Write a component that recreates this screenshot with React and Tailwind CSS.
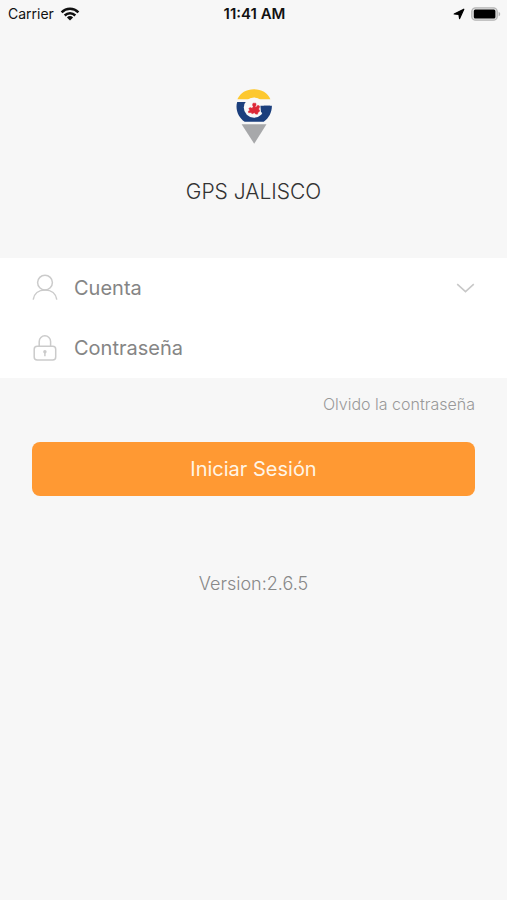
import { useState } from 'react';

function WifiIcon() {
    return (
        <svg viewBox="0 0 20 14" className="h-3.5 w-5" aria-hidden="true">
            <g fill="none" stroke="#111" strokeWidth="2.5">
                <path d="M1.6 5.3a12 12 0 0 1 16.8 0" />
                <path d="M4.7 8.5a7.6 7.6 0 0 1 10.6 0" />
            </g>
            <path d="M10 13.4 6.9 10.4a4.5 4.5 0 0 1 6.2 0z" fill="#111" />
        </svg>
    );
}

function LocationIcon() {
    return (
        <svg viewBox="0 0 12 12" className="size-3" aria-hidden="true">
            <path d="M10.8 1.2 6.6 10.6 5.9 6.4 1.2 6z" fill="#000" stroke="#000" strokeWidth="1.2" strokeLinejoin="round" />
        </svg>
    );
}

function BatteryIcon() {
    return (
        <svg viewBox="0 0 30 14" className="h-3.5 w-[30px]" aria-hidden="true">
            <rect x=".8" y=".8" width="25.4" height="12.4" rx="3.8" fill="#e4e4e4" stroke="#b4b4b4" strokeWidth="1.3" />
            <rect x="2.8" y="2.6" width="21.6" height="8.8" rx="1.5" fill="#000" />
            <path d="M27.6 4.7c2.1.8 2.1 3.8 0 4.6z" fill="#b4b4b4" />
        </svg>
    );
}

function Logo() {
    return (
        <svg viewBox="0 0 36 56" className="h-14 w-9" role="img" aria-label="GPS Jalisco">
            <path d="M1.4 11.2C4.2 4.8 10.4 1.2 17.9 1.2s13.8 3.6 16.5 10z" fill="#fdc82f" />
            <path d="M1.2 14H17v3.8h18.9c0 6.6-3 12.4-8.2 16H8.7C3.7 30.4.5 24.8.5 18.5c0-1.6.2-3.1.7-4.5z" fill="#1b3f7d" />
            <circle cx="18" cy="19.6" r="10.2" fill="#f8f8f8" />
            <path d="M24.4 17.8H34v6.4h-4l-2 2.4-3-2.6z" fill="#1b3f7d" />
            <path d="M17 15.2h2.8l.3 2-.9 1.2.8.9 1.8-2 1.7.7-.2 1.8-.7 1.2 1.3 1.9-1.9 1.5-.5 1.8-2-.2-1-1.3-2.5 1.100-.9-1.300-2.500.2-.3-1.500 1.500-.8-1-2 1.400-.8 2 .7 1-1.700-.7-1.500z" fill="#dd2837" stroke="#dd2837" strokeWidth=".5" />
            <path d="M5.6 36.2h24.900L18.200 55.700z" fill="#a7a8aa" />
        </svg>
    );
}

function UserIcon() {
    return (
        <svg viewBox="0 0 26 28" className="h-7 w-[26px]" fill="none" stroke="#cbcbcb" strokeWidth="1.5" aria-hidden="true">
            <circle cx="13" cy="8.6" r="7.4" />
            <path d="M1.2 25.6C2 19.8 6.5 16 13 16S24 19.8 24.8 25.6" />
        </svg>
    );
}

function LockIcon() {
    return (
        <svg viewBox="0 0 26 28" className="h-7 w-[26px]" fill="none" stroke="#cbcbcb" strokeWidth="1.5" aria-hidden="true">
            <rect x="2.2" y="12.2" width="21.5" height="13.7" rx="3" />
            <path d="M7.2 12V7.5a5.7 5.7 0 0 1 11.4 0V12" />
            <path d="M12.9 18v4.2" />
            <circle cx="12.9" cy="17.8" r="1" fill="#cbcbcb" />
        </svg>
    );
}

function StatusBar() {
    return (
        <div className="grid h-7 grid-cols-3 items-center pr-1.5 pl-2 text-sm text-[#111]">
            <div className="flex items-center gap-1.5">
                <span>Carrier</span>
                <WifiIcon />
            </div>
            <span className="text-center text-[15px] font-semibold">11:41 AM</span>
            <div className="flex items-center justify-end gap-1.5">
                <LocationIcon />
                <BatteryIcon />
            </div>
        </div>
    );
}

export default function App() {
    const [account, setAccount] = useState('');
    const [password, setPassword] = useState('');

    return (
        <div className="min-h-screen bg-[#f7f7f7] font-['Inter',sans-serif]">
            <StatusBar />

            <header className="flex flex-col items-center pt-[60px]">
                <Logo />
                <h1 className="mt-8 text-[21px] leading-8 font-light text-[#333]">GPS JALISCO</h1>
            </header>

            <form className="mt-[50px]" onSubmit={(e) => e.preventDefault()}>
                <div className="bg-white px-8">
                    <div className="flex h-[60px] items-center gap-4">
                        <label htmlFor="account" aria-label="Cuenta">
                            <UserIcon />
                        </label>
                        <input
                            id="account"
                            type="text"
                            placeholder="Cuenta"
                            value={account}
                            onChange={(e) => setAccount(e.target.value)}
                            className="h-full min-w-0 flex-1 text-xl text-[#333] outline-none placeholder:text-[#858585]"
                        />
                        <button type="button" aria-label="Mostrar cuentas">
                            <svg viewBox="0 0 20 12" className="h-3 w-5" fill="none" stroke="#c8c8c8" strokeWidth="1.6" aria-hidden="true">
                                <path d="M2.2 2.2 10.5 9.7l8.3-7.5" />
                            </svg>
                        </button>
                    </div>
                    <div className="flex h-[60px] items-center gap-4">
                        <label htmlFor="password" aria-label="Contraseña">
                            <LockIcon />
                        </label>
                        <input
                            id="password"
                            type="password"
                            placeholder="Contraseña"
                            value={password}
                            onChange={(e) => setPassword(e.target.value)}
                            className="h-full min-w-0 flex-1 text-xl text-[#333] outline-none placeholder:text-[#858585]"
                        />
                    </div>
                </div>

                <div className="px-8">
                    <div className="flex justify-end pt-3.5">
                        <a href="#recuperar" className="text-base leading-6 font-light text-[#999]">
                            Olvido la contraseña
                        </a>
                    </div>
                    <button type="submit" className="mt-[26px] h-[54px] w-full rounded-lg bg-[#ff9933] text-xl text-[#fff5e6]">
                        Iniciar Sesión
                    </button>
                </div>
            </form>

            <p className="mt-[72px] text-center text-lg leading-8 font-light text-[#888]">Version:2.6.5</p>
        </div>
    );
}
